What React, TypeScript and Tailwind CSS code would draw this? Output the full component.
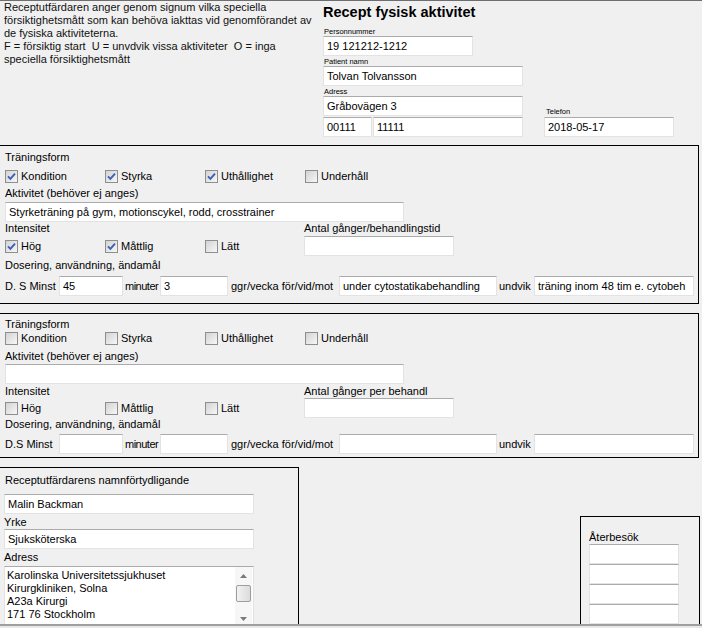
import React from 'react';

type Kids = { children?: React.ReactNode };

// white edit field, win-classic look
const Field = ({ w, h = 'h-[20px]', children }: { w: string; h?: string } & Kids) => (
  <div className={`${w} ${h} shrink-0 bg-white border border-[#e3e3e3] border-t-[#ababab] px-[3px] leading-[18px] whitespace-nowrap overflow-hidden`}>
    {children}
  </div>
);

const Tiny = ({ children, cls = '' }: { cls?: string } & Kids) => (
  <div className={`text-[7.5px] leading-[9px] h-[9px] ${cls}`}>{children}</div>
);

const Label = ({ children, cls = '' }: { cls?: string } & Kids) => (
  <div className={`h-[13px] leading-[13px] whitespace-nowrap ${cls}`}>{children}</div>
);

const Check = ({ label, checked, w }: { label: string; checked?: boolean; w: string }) => (
  <div className={`${w} flex items-center gap-[3px] shrink-0`}>
    <span className="w-[13px] h-[13px] shrink-0 border border-[#8e8e8e] bg-linear-to-br from-[#d3d3d3] to-[#f7f7f7] flex items-center justify-center">
      {checked && (
        <svg width="9" height="9" viewBox="0 0 9 9">
          <path d="M1 4.3 L3.4 6.8 L8 1.6" fill="none" stroke="#3d60b3" strokeWidth="1.9" />
        </svg>
      )}
    </span>
    <span className="leading-[13px]">{label}</span>
  </div>
);

interface TrainingProps {
  tall?: boolean;
  form: boolean[];
  aktivitet: string;
  intens: boolean[];
  antalLabel: string;
  dsLabel: string;
  values: string[];
}

const Training = ({ tall, form, aktivitet, intens, antalLabel, dsLabel, values }: TrainingProps) => (
  <div className={`w-[699px] shrink-0 border border-black border-l-0 pl-[5px] ${tall ? 'h-[159px] pt-[5px]' : 'h-[145px] pt-[4px]'}`}>
    <Label>Träningsform</Label>
    <div className={`flex items-center h-[15px] ${tall ? 'mt-[5px]' : 'mt-0'}`}>
      <Check w="w-[100px]" label="Kondition" checked={form[0]} />
      <Check w="w-[100px]" label="Styrka" checked={form[1]} />
      <Check w="w-[100px]" label="Uthållighet" checked={form[2]} />
      <Check w="w-[100px]" label="Underhåll" checked={form[3]} />
    </div>
    <Label cls={tall ? 'mt-[3px]' : 'mt-[4px]'}>Aktivitet (behöver ej anges)</Label>
    <div className={tall ? 'mt-[2px]' : 'mt-[1px]'}>
      <Field w="w-[399px]">{aktivitet}</Field>
    </div>
    <div className={`flex ${tall ? 'mt-0' : 'mt-[1px]'}`}>
      <Label cls="w-[299px]">Intensitet</Label>
      <Label>{antalLabel}</Label>
    </div>
    <div className={`flex items-center ${tall ? 'mt-[1px]' : 'mt-0'}`}>
      <Check w="w-[100px]" label="Hög" checked={intens[0]} />
      <Check w="w-[100px]" label="Måttlig" checked={intens[1]} />
      <Check w="w-[99px]" label="Lätt" checked={intens[2]} />
      <Field w="w-[150px]" />
    </div>
    <Label cls={tall ? 'mt-[3px]' : 'mt-0'}>Dosering, användning, ändamål</Label>
    <div className={`flex items-center ${tall ? 'mt-[4px]' : 'mt-[3px]'}`}>
      <div className="w-[54px] shrink-0 whitespace-nowrap">{dsLabel}</div>
      <Field w="w-[64px]">{values[0]}</Field>
      <div className="w-[37px] shrink-0 pl-[2px] tracking-[-0.5px] whitespace-nowrap">minuter</div>
      <Field w="w-[68px]">{values[1]}</Field>
      <div className="w-[111px] shrink-0 pl-[3px] whitespace-nowrap">ggr/vecka för/vid/mot</div>
      <Field w="w-[158px]">{values[2]}</Field>
      <div className="w-[37px] shrink-0 pl-[2px]">undvik</div>
      <Field w="w-[160px]">{values[3]}</Field>
    </div>
  </div>
);

const Arrow = ({ up }: { up?: boolean }) => (
  <svg width="7" height="4" viewBox="0 0 7 4">
    <path d={up ? 'M0 4 L3.5 0 L7 4 Z' : 'M0 0 L3.5 4 L7 0 Z'} fill="#7a7a7a" />
  </svg>
);

export default function App() {
  return (
    <div className="w-[702px] h-[628px] bg-[#f0f0f0] border-t border-[#6e6e6e] flex flex-col overflow-hidden text-[11px] text-black font-['Liberation_Sans',Arial,sans-serif]">
      {/* header */}
      <div className="h-[144px] shrink-0 flex">
        <div className="w-[323px] shrink-0 pl-[4px] leading-[13px] whitespace-pre text-[#111]">
          <div>Receptutfärdaren anger genom signum vilka speciella</div>
          <div>försiktighetsmått som kan behöva iakttas vid genomförandet av</div>
          <div>de fysiska aktiviteterna.</div>
          <div>F = försiktig start  U = unvdvik vissa aktiviteter  O = inga</div>
          <div>speciella försiktighetsmått</div>
        </div>
        <div className="flex flex-col pt-[3px]">
          <div className="h-[17px] leading-[17px] text-[14.5px] font-bold whitespace-nowrap">Recept fysisk aktivitet</div>
          <Tiny cls="mt-[6px] pl-px">Personnummer</Tiny>
          <Field w="w-[150px]">19 121212-1212</Field>
          <Tiny cls="mt-px pl-px">Patient namn</Tiny>
          <Field w="w-[200px]">Tolvan Tolvansson</Field>
          <div className="flex items-end">
            <div className="flex flex-col">
              <Tiny cls="mt-px pl-px">Adress</Tiny>
              <Field w="w-[200px]">Gråbovägen 3</Field>
              <div className="flex gap-[1px] mt-px">
                <Field w="w-[49px]">00111</Field>
                <Field w="w-[150px]">11111</Field>
              </div>
            </div>
            <div className="flex flex-col ml-[21px]">
              <Tiny cls="pl-[2px] mb-px">Telefon</Tiny>
              <Field w="w-[130px]">2018-05-17</Field>
            </div>
          </div>
        </div>
      </div>

      <Training
        tall
        form={[true, true, true, false]}
        aktivitet="Styrketräning på gym,  motionscykel, rodd, crosstrainer"
        intens={[true, true, false]}
        antalLabel="Antal gånger/behandlingstid"
        dsLabel="D. S Minst"
        values={['45', '3', 'under cytostatikabehandling', 'träning inom 48 tim e. cytobeh']}
      />

      <div className="mt-[9px]">
        <Training
          form={[false, false, false, false]}
          aktivitet=""
          intens={[false, false, false]}
          antalLabel="Antal gånger per behandl"
          dsLabel="D.S Minst"
          values={['', '', '', '']}
        />
      </div>

      {/* bottom row */}
      <div className="mt-[9px] flex-1 flex min-h-0">
        <div className="w-[299px] shrink-0 border border-black border-l-0 border-b-0 pl-[4px] pt-[6px]">
          <Label cls="pl-px">Receptutfärdarens namnförtydligande</Label>
          <div className="mt-[7px]">
            <Field w="w-[250px]">Malin Backman</Field>
          </div>
          <Label cls="mt-[2px]">Yrke</Label>
          <Field w="w-[250px]">Sjuksköterska</Field>
          <Label cls="mt-[2px]">Adress</Label>
          <div className="mt-[2px] w-[250px] h-[62px] bg-white border border-[#e3e3e3] border-t-[#ababab] flex">
            <div className="flex-1 pl-[2px] pt-[2px] leading-[13px] whitespace-nowrap">
              <div>Karolinska Universitetssjukhuset</div>
              <div>Kirurgkliniken, Solna</div>
              <div>A23a Kirurgi</div>
              <div>171 76 Stockholm</div>
            </div>
            <div className="w-[17px] mr-px flex flex-col items-center bg-[#f7f7f7]">
              <div className="h-[17px] flex items-center justify-center">
                <Arrow up />
              </div>
              <div className="w-[15px] h-[17px] mt-[1px] rounded-[2px] border border-[#9e9e9e] bg-linear-to-r from-[#f2f2f2] to-[#dcdcdc]" />
              <div className="flex-1" />
              <div className="h-[16px] flex items-center justify-center">
                <Arrow />
              </div>
            </div>
          </div>
        </div>

        <div className="ml-[281px] mt-[49px] w-[120px] shrink-0 border border-black border-b-0 pl-[8px] pt-[14px]">
          <Label>Återbesök</Label>
          <div className="flex flex-col">
            <Field w="w-[90px]" />
            <Field w="w-[90px]" />
            <Field w="w-[90px]" />
            <Field w="w-[90px]" />
          </div>
        </div>
      </div>

      <div className="h-[2px] shrink-0 bg-[#9f9f9f]" />
      <div className="h-[2px] shrink-0 bg-[#e8e8e8]" />
    </div>
  );
}
